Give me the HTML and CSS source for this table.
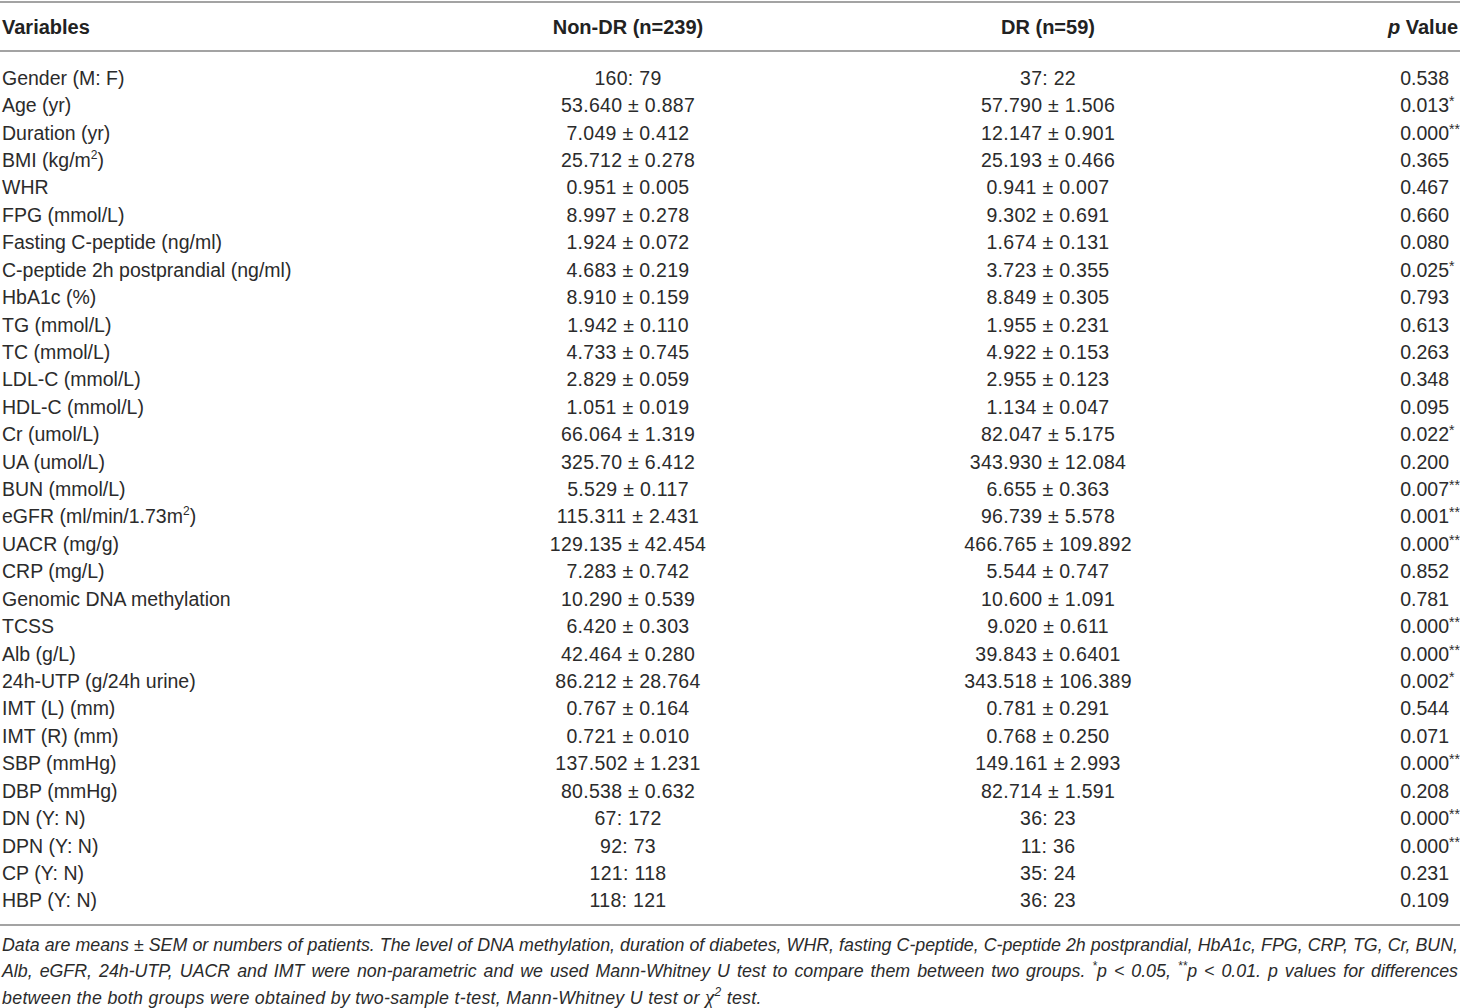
FILE: index.html
```html
<!DOCTYPE html>
<html lang="en">
<head>
<meta charset="utf-8">
<title>Table</title>
<link rel="stylesheet" href="styles.css">
</head>
<body>
<table class="tbl">
  <colgroup>
    <col class="c1"><col class="c2"><col class="c3"><col class="c4">
  </colgroup>
  <thead>
    <tr>
      <th class="left">Variables</th>
      <th>Non-DR (n=239)</th>
      <th>DR (n=59)</th>
      <th class="right"><i>p</i> Value</th>
    </tr>
  </thead>
  <tbody>
    <tr class="first"><td>Gender (M: F)</td><td>160: 79</td><td>37: 22</td><td class="p">0.538</td></tr>
    <tr><td>Age (yr)</td><td>53.640 ± 0.887</td><td>57.790 ± 1.506</td><td class="p">0.013<span class="st">*</span></td></tr>
    <tr><td>Duration (yr)</td><td>7.049 ± 0.412</td><td>12.147 ± 0.901</td><td class="p">0.000<span class="st">**</span></td></tr>
    <tr><td>BMI (kg/m<sup>2</sup>)</td><td>25.712 ± 0.278</td><td>25.193 ± 0.466</td><td class="p">0.365</td></tr>
    <tr><td>WHR</td><td>0.951 ± 0.005</td><td>0.941 ± 0.007</td><td class="p">0.467</td></tr>
    <tr><td>FPG (mmol/L)</td><td>8.997 ± 0.278</td><td>9.302 ± 0.691</td><td class="p">0.660</td></tr>
    <tr><td>Fasting C-peptide (ng/ml)</td><td>1.924 ± 0.072</td><td>1.674 ± 0.131</td><td class="p">0.080</td></tr>
    <tr><td>C-peptide 2h postprandial (ng/ml)</td><td>4.683 ± 0.219</td><td>3.723 ± 0.355</td><td class="p">0.025<span class="st">*</span></td></tr>
    <tr><td>HbA1c (%)</td><td>8.910 ± 0.159</td><td>8.849 ± 0.305</td><td class="p">0.793</td></tr>
    <tr><td>TG (mmol/L)</td><td>1.942 ± 0.110</td><td>1.955 ± 0.231</td><td class="p">0.613</td></tr>
    <tr><td>TC (mmol/L)</td><td>4.733 ± 0.745</td><td>4.922 ± 0.153</td><td class="p">0.263</td></tr>
    <tr><td>LDL-C (mmol/L)</td><td>2.829 ± 0.059</td><td>2.955 ± 0.123</td><td class="p">0.348</td></tr>
    <tr><td>HDL-C (mmol/L)</td><td>1.051 ± 0.019</td><td>1.134 ± 0.047</td><td class="p">0.095</td></tr>
    <tr><td>Cr (umol/L)</td><td>66.064 ± 1.319</td><td>82.047 ± 5.175</td><td class="p">0.022<span class="st">*</span></td></tr>
    <tr><td>UA (umol/L)</td><td>325.70 ± 6.412</td><td>343.930 ± 12.084</td><td class="p">0.200</td></tr>
    <tr><td>BUN (mmol/L)</td><td>5.529 ± 0.117</td><td>6.655 ± 0.363</td><td class="p">0.007<span class="st">**</span></td></tr>
    <tr><td>eGFR (ml/min/1.73m<sup>2</sup>)</td><td>115.311 ± 2.431</td><td>96.739 ± 5.578</td><td class="p">0.001<span class="st">**</span></td></tr>
    <tr><td>UACR (mg/g)</td><td>129.135 ± 42.454</td><td>466.765 ± 109.892</td><td class="p">0.000<span class="st">**</span></td></tr>
    <tr><td>CRP (mg/L)</td><td>7.283 ± 0.742</td><td>5.544 ± 0.747</td><td class="p">0.852</td></tr>
    <tr><td>Genomic DNA methylation</td><td>10.290 ± 0.539</td><td>10.600 ± 1.091</td><td class="p">0.781</td></tr>
    <tr><td>TCSS</td><td>6.420 ± 0.303</td><td>9.020 ± 0.611</td><td class="p">0.000<span class="st">**</span></td></tr>
    <tr><td>Alb (g/L)</td><td>42.464 ± 0.280</td><td>39.843 ± 0.6401</td><td class="p">0.000<span class="st">**</span></td></tr>
    <tr><td>24h-UTP (g/24h urine)</td><td>86.212 ± 28.764</td><td>343.518 ± 106.389</td><td class="p">0.002<span class="st">*</span></td></tr>
    <tr><td>IMT (L) (mm)</td><td>0.767 ± 0.164</td><td>0.781 ± 0.291</td><td class="p">0.544</td></tr>
    <tr><td>IMT (R) (mm)</td><td>0.721 ± 0.010</td><td>0.768 ± 0.250</td><td class="p">0.071</td></tr>
    <tr><td>SBP (mmHg)</td><td>137.502 ± 1.231</td><td>149.161 ± 2.993</td><td class="p">0.000<span class="st">**</span></td></tr>
    <tr><td>DBP (mmHg)</td><td>80.538 ± 0.632</td><td>82.714 ± 1.591</td><td class="p">0.208</td></tr>
    <tr><td>DN (Y: N)</td><td>67: 172</td><td>36: 23</td><td class="p">0.000<span class="st">**</span></td></tr>
    <tr><td>DPN (Y: N)</td><td>92: 73</td><td>11: 36</td><td class="p">0.000<span class="st">**</span></td></tr>
    <tr><td>CP (Y: N)</td><td>121: 118</td><td>35: 24</td><td class="p">0.231</td></tr>
    <tr class="last"><td>HBP (Y: N)</td><td>118: 121</td><td>36: 23</td><td class="p">0.109</td></tr>
  </tbody>
</table>
<div class="notes">
  <div class="line just">Data are means ± SEM or numbers of patients. The level of DNA methylation, duration of diabetes, WHR, fasting C-peptide, C-peptide 2h postprandial, HbA1c, FPG, CRP, TG, Cr, BUN,</div>
  <div class="line just">Alb, eGFR, 24h-UTP, UACR and IMT were non-parametric and we used Mann-Whitney U test to compare them between two groups. <sup class="ns">*</sup>p &lt; 0.05, <sup class="ns">**</sup>p &lt; 0.01. p values for differences</div>
  <div class="line tail">between the both groups were obtained by two-sample t-test, Mann-Whitney U test or <span class="chi">χ<sup>2</sup></span> test.</div>
</div>
</body>
</html>
```
FILE: styles.css
```css
html, body {
  margin: 0;
  padding: 0;
  background: #ffffff;
}
body {
  font-family: "Liberation Sans", Arial, Helvetica, sans-serif;
  color: #2b2b2b;
  width: 1460px;
}
.tbl {
  width: 1460px;
  border-collapse: collapse;
  table-layout: fixed;
  font-size: 19.5px;
  margin-top: 1px;
}
.c1 { width: 420px; }
.c2 { width: 416px; }
.c3 { width: 424px; }
.c4 { width: 200px; }
.tbl thead tr {
  border-top: 2px solid #a3a3a3;
  border-bottom: 2px solid #a3a3a3;
}
.tbl th {
  font-weight: bold;
  font-size: 20px;
  text-align: center;
  height: 45px;
  padding: 2px 2px 0 2px;
  vertical-align: middle;
  color: #222;
}
.tbl th.left { text-align: left; }
.tbl th.right { text-align: right; }
.tbl td {
  text-align: center;
  height: 27.43px;
  padding: 0;
  line-height: 22px;
  vertical-align: middle;
  white-space: nowrap;
  letter-spacing: 0.3px;
}
.tbl td:first-child {
  text-align: left;
  padding-left: 2px;
  letter-spacing: 0;
}
.tbl td.p {
  text-align: right;
  padding-right: 11px;
  letter-spacing: 0;
}
.tbl tr.first td {
  padding-top: 12px;
}
.tbl tr.last {
  border-bottom: 2px solid #a3a3a3;
}
.tbl tr.last td {
  padding-bottom: 10px;
}
.st {
  display: inline-block;
  width: 0;
  font-size: 14px;
  vertical-align: 6px;
  text-align: left;
  line-height: 1;
}
sup {
  font-size: 12px;
  line-height: 0;
  vertical-align: 8px;
}
.notes {
  font-style: italic;
  font-size: 17.8px;
  line-height: 26px;
  padding: 6px 2px 0 2px;
  color: #2b2b2b;
}
.line {
  white-space: nowrap;
}
.line.just {
  text-align: justify;
  text-align-last: justify;
}
.line.tail {
  letter-spacing: 0.3px;
}
.ns {
  font-size: 12px;
  vertical-align: 7px;
}
.chi {
  font-family: "Liberation Serif", "Times New Roman", serif;
  font-size: 21px;
}
.chi sup {
  font-family: "Liberation Sans", Arial, sans-serif;
}
```
